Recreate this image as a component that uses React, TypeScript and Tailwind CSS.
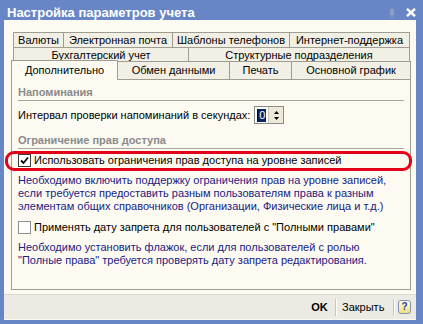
import React from "react";

const tabRows = [
  { indent: "ml-[2px]", tabs: [["Валюты", "w-[50px]"], ["Электронная почта", "w-[109px]"], ["Шаблоны телефонов", "w-[117px]"], ["Интернет-поддержка", "w-[121px]"]] },
  { indent: "ml-[2px]", tabs: [["Бухгалтерский учет", "w-[175px]"], ["Структурные подразделения", "w-[222px]"]] },
];

export default function App() {
  return (
    <div className="w-[423px] h-[324px] bg-[#6886c5] flex flex-col font-['Liberation_Sans',Arial,sans-serif] text-[11px] text-black select-none">
      <TitleBar />
      <div className="relative flex-1 ml-[4px] mr-[7px] mb-[4px] bg-[#fdfbf1] flex flex-col">
        <div className="pt-[12px] pl-[7px] pr-[5px]">
          {/* tab rows */}
          {tabRows.map((row, i) => (
            <div key={i} className={`flex h-[15px] ${row.indent}`}>
              {row.tabs.map(([label, w], j) => (
                <div
                  key={label}
                  className={`${w} flex items-center justify-center border-t border-l border-[#9f9d91] bg-[#f2f0e5] leading-[13px] ${j === row.tabs.length - 1 ? "border-r" : ""}`}
                >
                  {label}
                </div>
              ))}
            </div>
          ))}
          <div className="flex items-end h-[18px] -mt-[1px]">
            <div className="relative z-10 w-[107px] h-[20px] -mb-px flex items-center justify-center border-t border-l border-r border-[#9f9d91] bg-[#fdfbf1] leading-[13px]">
              Дополнительно
            </div>
            {[["Обмен данными", "w-[111px]"], ["Печать", "w-[62px]"], ["Основной график", "w-[120px]"]].map(([label, w], j) => (
              <div
                key={label}
                className={`${w} h-[18px] flex items-center justify-center border-t border-[#9f9d91] bg-[#f2f0e5] leading-[13px] ${j === 0 ? "" : "border-l"} ${j === 2 ? "border-r" : ""}`}
              >
                {label}
              </div>
            ))}
          </div>
          {/* panel */}
          <div className="h-[211px] border border-[#9f9d91] bg-[#fdfbf1] pt-[6px] pl-[6px] pr-[6px] leading-[13px]">
            <SectionHeader>Напоминания</SectionHeader>
            <div className="mt-[5px] flex items-center h-[18px]">
              <span>Интервал проверки напоминаний в секундах:</span>
              <SpinBox />
            </div>
            <div className="mt-[10px]">
              <SectionHeader>Ограничение прав доступа</SectionHeader>
            </div>
            <div className="mt-[5px] flex items-center h-[13px] gap-[3px]">
              <CheckBox checked />
              <span>Использовать ограничения прав доступа на уровне записей</span>
            </div>
            <p className="mt-[7px] text-[#1a2182]">
              Необходимо включить поддержку ограничения прав на уровне записей,
              <br />
              если требуется предоставить разным пользователям права к разным
              <br />
              элементам общих справочников (Организации, Физические лица и т.д.)
            </p>
            <div className="mt-[8px] flex items-center h-[13px] gap-[3px]">
              <CheckBox />
              <span>Применять дату запрета для пользователей с "Полными правами"</span>
            </div>
            <p className="mt-[7px] text-[#1a2182]">
              Необходимо установить флажок, если для пользователей с ролью
              <br />
              "Полные права" требуется проверять дату запрета редактирования.
            </p>
          </div>
        </div>
        {/* bottom bar */}
        <div className="mt-[4px] h-[25px] bg-[#ecebe3] border-t border-[#dcdad0] flex items-center justify-end pr-[5px]">
          <div className="w-[34px] pl-[3px] text-center font-bold text-[11px] leading-[13px]">OK</div>
          <Separator />
          <div className="w-[56px] pl-[5px] leading-[13px]">Закрыть</div>
          <Separator />
          <div className="ml-[3px] w-[13px] h-[14px] rounded-[3px] border border-[#8592b3] bg-gradient-to-b from-[#fffde6] to-[#f3df7c] flex items-center justify-center text-[10px] font-bold text-[#1c3ea6] leading-none">
            ?
          </div>
        </div>
        {/* annotation */}
        <div className="absolute left-[1px] top-[131px] w-[407px] h-[20px] border-[3px] border-[#e5001a] rounded-[9px] pointer-events-none" />
      </div>
    </div>
  );
}

function TitleBar() {
  return (
    <div className="h-[20px] flex items-center pt-[4px] pl-[7px] pr-[7px] text-white">
      <span className="flex-1 font-bold text-[13px] leading-[13px]">Настройка параметров учета</span>
      <svg width="6" height="9" viewBox="0 0 6 9" className="mr-[11px] mt-[2px]">
        <rect x="1" y="0" width="4" height="5" fill="#8d9fc9" />
        <rect x="0" y="5" width="6" height="1" fill="#8d9fc9" />
        <rect x="2.5" y="6" width="1" height="3" fill="#8d9fc9" />
      </svg>
      <svg width="10" height="9" viewBox="0 0 10 9" className="mt-[1px]">
        <path d="M1 0.8 L9 8.2 M9 0.8 L1 8.2" stroke="#fff" strokeWidth="2.4" />
      </svg>
    </div>
  );
}

function SectionHeader({ children }: { children: React.ReactNode }) {
  return (
    <div className="h-[15px] border-b border-[#a9a79d] font-bold text-[#8a8a8a]">
      {children}
    </div>
  );
}

function SpinBox() {
  return (
    <div className="ml-[4px] flex w-[30px] h-[18px] border border-[#8a8a8a] bg-white">
      <div className="flex-1 flex items-center pl-[2px]">
        <span className="bg-[#0a246a] text-white h-[13px] px-[1px] leading-[13px] border-l border-black">0</span>
      </div>
      <div className="w-[15px] flex flex-col items-center justify-center gap-[3px] bg-[#ece9d8] border-l border-[#c8c6bb]">
        <svg width="5" height="3" viewBox="0 0 5 3">
          <path d="M0 3 L2.5 0 L5 3 Z" fill="#000" />
        </svg>
        <svg width="5" height="3" viewBox="0 0 5 3">
          <path d="M0 0 L2.5 3 L5 0 Z" fill="#000" />
        </svg>
      </div>
    </div>
  );
}

function CheckBox({ checked = false }: { checked?: boolean }) {
  return (
    <div className={`w-[13px] h-[13px] bg-white border flex items-center justify-center ${checked ? "border-[#3a3a3a]" : "border-[#8e8e8e]"}`}>
      {checked && (
        <svg width="9" height="9" viewBox="0 0 9 9">
          <path d="M1 4.5 L3.5 7 L8 1.5" stroke="#000" strokeWidth="1.8" fill="none" />
        </svg>
      )}
    </div>
  );
}

function Separator() {
  return <div className="w-[2px] h-[17px] border-l border-[#c9c7bc] border-r border-r-white" />;
}
